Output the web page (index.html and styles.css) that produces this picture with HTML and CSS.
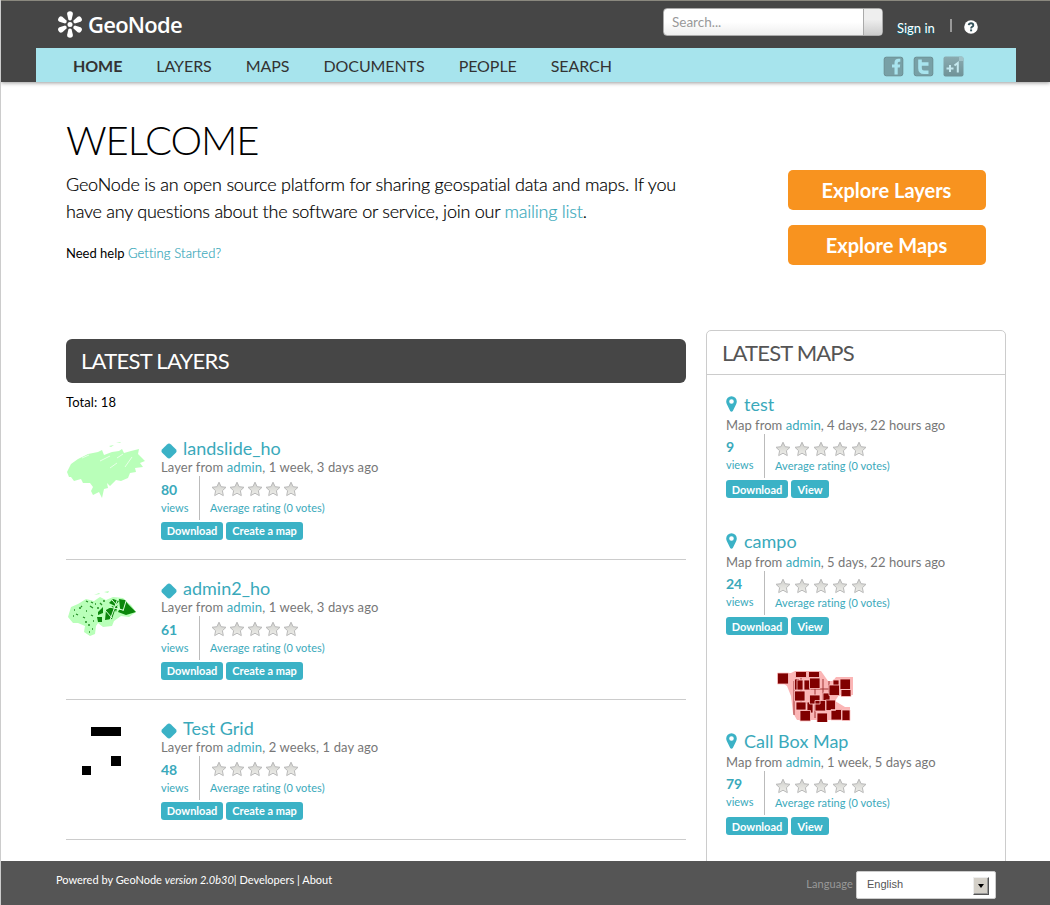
FILE: index.html
```html
<!DOCTYPE html>
<html lang="en">
<head>
<meta charset="utf-8">
<title>GeoNode</title>
<link rel="stylesheet" href="styles.css">
</head>
<body>
<svg class="defs" width="0" height="0">
  <defs>
    <linearGradient id="starfill" x1="0" y1="0" x2="0" y2="1"><stop offset="0" stop-color="#cfcfcb"/><stop offset="1" stop-color="#efefeb"/></linearGradient>
    <linearGradient id="gplus" x1="0" y1="0" x2="0" y2="1"><stop offset="0" stop-color="#8aabb0"/><stop offset="1" stop-color="#6f9297"/></linearGradient>
    <symbol id="star" viewBox="0 0 16 16"><path d="M8 1.200l2.100 4.500 4.900.6-3.600 3.400.9 4.900L8 12.200l-4.300 2.400.9-4.900L1 6.300l4.900-.6z" fill="url(#starfill)" stroke="#b9b9b9" stroke-width="1"/></symbol>
    <symbol id="diamond" viewBox="0 0 16 16"><path d="M6 1.400q2-1.800 4 0l4.800 4.800q1.500 1.800 0 3.600L10 14.600q-2 1.800-4 0L1.200 9.800q-1.500-1.800 0-3.600z" fill="#3bb2c6"/></symbol>
    <symbol id="pin" viewBox="0 0 11 16"><path fill-rule="evenodd" d="M5.500.3a5.300 5.200 0 0 1 5.300 5.200c0 1.200-.3 2-.8 3L6.800 15q-1.300 1.500-2.600 0L1 8.500c-.5-1-.8-1.800-.8-3A5.300 5.200 0 0 1 5.500.3zm0 2.900a2.300 2.300 0 1 0 0 4.600 2.300 2.300 0 0 0 0-4.600z" fill="#3bb2c6"/></symbol>
  </defs>
</svg>
<div class="page">
  <header class="header">
    <div class="topbar">
      <div class="logo">
        <svg width="27" height="27" viewBox="0 0 27 27" fill="#fff"><circle cx="13" cy="13.500" r="2.500"/><path id="petal" d="M11.400 8.800L10.100 3q0-2.700 2.900-2.700T15.900 3l-1.300 5.800q-1.600 1.300-3.200 0z"/><use href="#petal" transform="rotate(60 13 13.500)"/><use href="#petal" transform="rotate(120 13 13.500)"/><use href="#petal" transform="rotate(180 13 13.500)"/><use href="#petal" transform="rotate(240 13 13.500)"/><use href="#petal" transform="rotate(300 13 13.500)"/></svg>
        <span class="brand">GeoNode</span>
      </div>
      <div class="search"><span class="query">Search...</span><span class="go"></span></div>
      <a class="signin">Sign in</a><span class="bar"></span>
      <svg class="help" width="14" height="14" viewBox="0 0 14 14"><circle cx="7" cy="7" r="6.800" fill="#fff"/><path d="M4.700 5.200Q5 3.300 7.100 3.300T9.300 5.200Q9.300 6.300 8 6.900 7.100 7.300 7.100 8.500" fill="none" stroke="#36535c" stroke-width="1.900"/><rect x="6.100" y="9.400" width="2" height="1.900" fill="#36535c"/></svg>
    </div>
    <nav class="nav">
      <a class="active">HOME</a><a>LAYERS</a><a>MAPS</a><a>DOCUMENTS</a><a>PEOPLE</a><a>SEARCH</a>
      <div class="social">
        <svg width="21" height="21" viewBox="0 0 21 21"><rect x="1.200" y="1.200" width="18.600" height="18.600" rx="2" fill="#78a0a6" stroke="#6b8d92"/><path d="M11.500 18.500v-7H9v-3h2.500V7q0-4.200 4-4.200h1.800v3h-1.300q-1.300 0-1.300 1.500v1.200h2.500l-.4 3h-2.100v7z" fill="#a8e4ee"/></svg>
        <svg width="21" height="21" viewBox="0 0 21 21"><rect x="1.200" y="1.200" width="18.600" height="18.600" rx="2" fill="#78a0a6" stroke="#6b8d92"/><path d="M7 3.500v8.800q0 4 4 4h4.500M7 8h8.500" fill="none" stroke="#a8e4ee" stroke-width="3.600"/></svg>
        <svg width="21" height="21" viewBox="0 0 21 21"><rect x=".5" y=".5" width="20" height="20" rx="2" fill="url(#gplus)"/><path d="M16 .5h2.500q2 0 2 2V5H16z" fill="#a0c2c8"/><path d="M3.500 12.500h7M7 9v7M11.500 9.500L14.800 7v9.500" fill="none" stroke="#c4e8ee" stroke-width="2"/></svg>
      </div>
    </nav>
  </header>

  <section class="hero">
    <div class="intro">
      <h1>WELCOME</h1>
      <p class="lead"><span>GeoNode is an open source platform for sharing geospatial data and maps. If you</span><br><span class="tight">have any questions about the software or service, join our <a>mailing list</a>.</span></p>
      <p class="started">Need help <a>Getting Started?</a></p>
    </div>
    <div class="actions"><a>Explore Layers</a><a>Explore Maps</a></div>
  </section>

  <main class="columns">
    <section class="layers">
      <h2>LATEST LAYERS</h2>
      <p class="total">Total: 18</p>
      <article class="layer">
        <div class="thumb"><svg width="80" height="60" viewBox="0 0 80 60"><path fill="#b9ffb9" d="M1 33L5 25 12 20 22 15 32 13 36 11 38 16 46 13 53 12 56 10 58 14 65 12 73 10 72 15 76 19 79 22 74 24 77 28 69 29 70 33 64 34 62 39 55 42 50 41 44 47 41 44 42 49 38 50 36 59 33 53 27 56 25 52 27 48 24 44 17 44 15 40 8 42 5 38 3 38zM43 7l5-1-3 2zm7-3l5-1-1 1z"/><path d="M23 16l-7 3M44 17l-10 5M66 18l-7 10M51 24l-7 5M57 15l-6 4" stroke="#e8ffe8"/></svg></div>
        <div class="info">
          <h3><svg width="16" height="16"><use href="#diamond"/></svg><span>landslide_ho</span></h3>
          <p class="meta">Layer from <a>admin</a>, 1 week, 3 days ago</p>
          <div class="stats"><div class="views"><b>80</b><span>views</span></div><div class="rating"><div class="stars"><svg><use href="#star"/></svg><svg><use href="#star"/></svg><svg><use href="#star"/></svg><svg><use href="#star"/></svg><svg><use href="#star"/></svg></div><span>Average rating (0 votes)</span></div></div>
          <div class="buttons"><a class="dl">Download</a><a class="create">Create a map</a></div>
        </div>
      </article>
      <article class="layer">
        <div class="thumb"><svg width="80" height="60" viewBox="0 0 80 60"><path fill="#b9ffb9" d="M2 38L5 28 12 25 20 20 28 22 34 18 40 21 47 18 57 19 61 23 65 26 70 33 63 38 55 37 48 42 46 47 37 48 32 44 30 47 29 55 24 57 18 53 19 47 12 44 7 44zM28 16l5-2 1 1zM38 13l5-1-1 2z"/><path fill="#0b870b" d="M43 24l4-4 6 2-4 5zm10-4l6 1 3 4 5 5 3 3-10 3-8-3 2-4zM40 31l7-4 2 4-3 9-7 1zM32 33l5-5v6l-5 2zM31 38h5v5h-4zM48 28l4-2-2 7z"/><path d="M20 22l2 1M24 27l3 2M15 27l1 1M25 23l2 1M34 24l2 2M10 35l2 1M17 38l2 1M25 36l2 1M7 37h1M31 29h2M27 42h1M22 46h2M26 50h1M13 29h2M20 32h1M19 43h2M29 25h1M8 31h1M23 53h1M37 22h2" stroke="#248f24" stroke-width="1.300"/><path d="M46 21l9 10M43 28l14 3M52 19l-8 22M39 31l7 8M60 22l-3 10" stroke="#d8ffd8"/></svg></div>
        <div class="info">
          <h3><svg width="16" height="16"><use href="#diamond"/></svg><span>admin2_ho</span></h3>
          <p class="meta">Layer from <a>admin</a>, 1 week, 3 days ago</p>
          <div class="stats"><div class="views"><b>61</b><span>views</span></div><div class="rating"><div class="stars"><svg><use href="#star"/></svg><svg><use href="#star"/></svg><svg><use href="#star"/></svg><svg><use href="#star"/></svg><svg><use href="#star"/></svg></div><span>Average rating (0 votes)</span></div></div>
          <div class="buttons"><a class="dl">Download</a><a class="create">Create a map</a></div>
        </div>
      </article>
      <article class="layer">
        <div class="thumb"><svg width="80" height="60" viewBox="0 0 80 60"><path d="M25 8h30v9H25zM45 37h10v10H45zM16 47h9v9h-9z"/></svg></div>
        <div class="info">
          <h3><svg width="16" height="16"><use href="#diamond"/></svg><span>Test Grid</span></h3>
          <p class="meta">Layer from <a>admin</a>, 2 weeks, 1 day ago</p>
          <div class="stats"><div class="views"><b>48</b><span>views</span></div><div class="rating"><div class="stars"><svg><use href="#star"/></svg><svg><use href="#star"/></svg><svg><use href="#star"/></svg><svg><use href="#star"/></svg><svg><use href="#star"/></svg></div><span>Average rating (0 votes)</span></div></div>
          <div class="buttons"><a class="dl">Download</a><a class="create">Create a map</a></div>
        </div>
      </article>
    </section>

    <aside class="maps">
      <h2>LATEST MAPS</h2>
      <article class="map">
        <h3><svg width="11" height="16"><use href="#pin"/></svg>test</h3>
        <p class="meta">Map from <a>admin</a>, 4 days, 22 hours ago</p>
        <div class="stats"><div class="views"><b>9</b><span>views</span></div><div class="rating"><div class="stars"><svg><use href="#star"/></svg><svg><use href="#star"/></svg><svg><use href="#star"/></svg><svg><use href="#star"/></svg><svg><use href="#star"/></svg></div><span>Average rating (0 votes)</span></div></div>
        <div class="buttons"><a class="dl">Download</a><a class="view">View</a></div>
      </article>
      <article class="map">
        <h3><svg width="11" height="16"><use href="#pin"/></svg>campo</h3>
        <p class="meta">Map from <a>admin</a>, 5 days, 22 hours ago</p>
        <div class="stats"><div class="views"><b>24</b><span>views</span></div><div class="rating"><div class="stars"><svg><use href="#star"/></svg><svg><use href="#star"/></svg><svg><use href="#star"/></svg><svg><use href="#star"/></svg><svg><use href="#star"/></svg></div><span>Average rating (0 votes)</span></div></div>
        <div class="buttons"><a class="dl">Download</a><a class="view">View</a></div>
      </article>
      <article class="map pictured">
        <svg class="preview" width="76" height="51" viewBox="0 0 76 51"><path fill="#fbb5b5" d="M0 2h14l4-2h26l7 10h5l3-4h17v18H62l-4 6 10 6h5v13H20l-4-7-2-17-4-10-10-7z"/><path d="M17 10v34M38 3v44M46 8v30M21 32h30M30 18h22M24 5v42M52 10v12" stroke="#a13434"/><g fill="#800000" stroke="#ffc4c4" stroke-width=".8"><path d="M17.500 8h5v11h-5zM27 9h6v10h-6zM56 9h6v8h-6zM46 22h7v8h-7zM30 31h6v11h-6z"/><path d="M.5 2h11v11H.5zM18.500.5h11v6h-11zM31.500.5h11v6h-11zM20 9h6v10h-6zM32.500 7h10.500v10.500H32.500zM17.500 20h10.500v10H17.500zM32.500 24h10.500v9H32.500zM52 14h10.500v10.500H52zM63 8h10.500v10.500H63zM64 18.500h10v7H64zM19 31h10v8H19zM38 29.500h11v10.500H38zM48.500 29h10v10.500h-10zM23 39.500h10.500v10.500H23zM40 42h10.500v10H40zM54 38.500h10.500v10.500H54zM65 39h8v10.500h-8z"/></g></svg>
        <h3><svg width="11" height="16"><use href="#pin"/></svg>Call Box Map</h3>
        <p class="meta">Map from <a>admin</a>, 1 week, 5 days ago</p>
        <div class="stats"><div class="views"><b>79</b><span>views</span></div><div class="rating"><div class="stars"><svg><use href="#star"/></svg><svg><use href="#star"/></svg><svg><use href="#star"/></svg><svg><use href="#star"/></svg><svg><use href="#star"/></svg></div><span>Average rating (0 votes)</span></div></div>
        <div class="buttons"><a class="dl">Download</a><a class="view">View</a></div>
      </article>
    </aside>
  </main>

  <footer class="footer">
    <p class="powered">Powered by GeoNode <i>version 2.0b30</i>| Developers | About</p>
    <div class="language"><span>Language</span><div class="select"><span>English</span><div class="arrow"></div></div></div>
  </footer>
</div>
</body>
</html>
```
FILE: styles.css
```css
* { box-sizing: border-box; }
body { margin: 0; font: 13px/17px Lato, sans-serif; color: #000; background: #fff; }
h1, h2, h3, p { margin: 0; font-weight: 400; }
a { color: #3aa9bb; text-decoration: none; }
span, a { white-space: nowrap; }
svg { display: block; flex: none; }
.defs { position: absolute; }
.page { height: 905px; overflow: hidden; display: flex; flex-direction: column; border-left: 1px solid #ccc; }
.header { flex: none; height: 82px; background: #464646; border-top: 1px solid #8a887e; box-shadow: 0 1px 4px rgba(0,0,0,.4); }
.topbar { height: 47px; display: flex; align-items: flex-start; padding-left: 56px; }
.logo { display: flex; width: 606px; padding-top: 10px; }
.brand { font: 600 22px/27px "Open Sans", sans-serif; letter-spacing: -.75px; color: #fff; margin-left: 4px; }
.search { width: 220px; height: 28px; margin-top: 7px; display: flex; border: 1px solid #aaa; border-radius: 4px; background: linear-gradient(#fff 50%, #eee); overflow: hidden; }
.query { flex: 1; padding-left: 8px; font-size: 13.500px; line-height: 26px; color: #999; }
.go { width: 19px; border-left: 1px solid #aaa; background: linear-gradient(#eee 40%, #ccc); }
.signin { margin: 19px 0 0 14px; width: 53px; color: #fff; text-shadow: 0 1px 1px #08758b; }
.bar { width: 2px; height: 13px; margin-top: 18px; background: #999; }
.help { margin: 19px 0 0 12px; }
.nav { height: 34px; margin: 0 34px 0 35px; padding-left: 37px; background: #a7e4ed; display: flex; gap: 34px; font-size: 16px; line-height: 36px; letter-spacing: -.07px; }
.nav a { color: #333; }
.nav .active { font-weight: 700; }
.social { display: flex; gap: 9px; margin: 8px 52px 0 auto; }

.hero { flex: none; height: 248px; display: flex; padding-left: 65px; }
.intro { width: 722px; padding-top: 33px; }
h1 { font-size: 40px; line-height: 50px; font-weight: 300; letter-spacing: -1.100px; }
.lead { margin-top: 6px; font-size: 18px; line-height: 27px; font-weight: 300; letter-spacing: -.19px; -webkit-text-stroke: .2px; }
.tight { letter-spacing: -.24px; }
.started { margin-top: 20px; font-size: 13px; }
.started a { font-weight: 300; letter-spacing: .13px; -webkit-text-stroke: .2px; }
.actions { display: flex; flex-direction: column; gap: 15px; padding-top: 88px; }
.actions a { width: 198px; height: 40px; border-radius: 5px; background: #f8931f; color: #fff; font-size: 20px; font-weight: 700; line-height: 40px; text-align: center; padding-right: 1px; }

.columns { flex: none; height: 531px; overflow: hidden; display: flex; gap: 20px; padding-left: 65px; }
.layers { width: 620px; padding-top: 9px; }
.layers h2 { height: 44px; border-radius: 6px; background: #464646; color: #fff; padding-left: 15px; font-size: 22px; line-height: 43px; letter-spacing: -.7px; }
.total { height: 37px; padding-top: 11px; letter-spacing: .1px; }
.layer { height: 140px; display: flex; padding-top: 19px; border-bottom: 1px solid #ccc; }
.thumb { width: 95px; }
h3 { display: flex; align-items: center; font-size: 18px; line-height: 20px; color: #3aa9bb; }
.layer h3 { height: 20px; }
.layer h3 svg { margin: 3px 6px 0 0; }
.layer h3 span { padding-bottom: 2px; }
.meta { height: 17px; color: #777; letter-spacing: .11px; }
.map .meta { letter-spacing: .04px; }
.stats { display: flex; height: 44px; }
.views { width: 39px; border-right: 1px solid #bbb; color: #3aa9bb; font-size: 11px; }
.views b { display: block; margin-top: 4px; font-size: 14px; line-height: 19px; }
.views span, .rating > span { display: block; line-height: 17px; }
.rating { padding-left: 10px; color: #3aa9bb; font-size: 11px; letter-spacing: .06px; }
.stars { display: flex; gap: 2px; padding: 5px 0 0 1px; height: 23px; }
.stars svg { width: 16px; height: 16px; }
.buttons { display: flex; gap: 3px; margin-top: 2px; }
.buttons a { height: 18px; border-radius: 3px; background: #3bb2c6; color: #fff; font-size: 11px; font-weight: 700; line-height: 18px; text-align: center; }
.map .buttons a { line-height: 20px; }
.dl { width: 62px; }
.create { width: 77px; }
.view { width: 38px; }

.maps { width: 300px; height: 560px; border: 1px solid #ccc; border-radius: 5px; }
.maps h2 { height: 44px; border-bottom: 1px solid #ccc; padding-left: 15px; color: #555; font-size: 22px; line-height: 43px; letter-spacing: -.8px; }
.map { height: 137px; padding: 19px 0 0 19px; }
.map h3 { height: 23px; padding-bottom: 3px; }
.map h3 svg { margin-right: 7px; }
.map .stars { gap: 3px; padding: 7px 0 0; height: 23px; }
.map .views b { margin-top: 3px; }
.preview { margin: 0 0 9px 51px; }
.pictured { height: 200px; padding-top: 22px; }

.footer { flex: none; height: 44px; background: #555; display: flex; justify-content: space-between; padding: 10px 54px 0 55px; color: #fff; font-size: 11px; }
.language { display: flex; gap: 3px; color: #999; line-height: 26px; }
.language > span { letter-spacing: .1px; }
.select { width: 140px; height: 28px; border: 1px solid #ccc; border-radius: 2px; background: #fff; color: #555; display: flex; justify-content: space-between; padding: 0 6px 0 10px; font: 11px/25px "Liberation Sans", sans-serif; }
.arrow { width: 16px; height: 18px; margin-top: 5px; background: #d4d0c8; border: 1px solid; border-color: #eee #555 #555 #eee; box-shadow: inset -1px -1px #999; display: flex; align-items: center; justify-content: center; }
.arrow::before { content: ""; border: 3px solid transparent; border-top: 4px solid #000; border-bottom: 0; }
```
